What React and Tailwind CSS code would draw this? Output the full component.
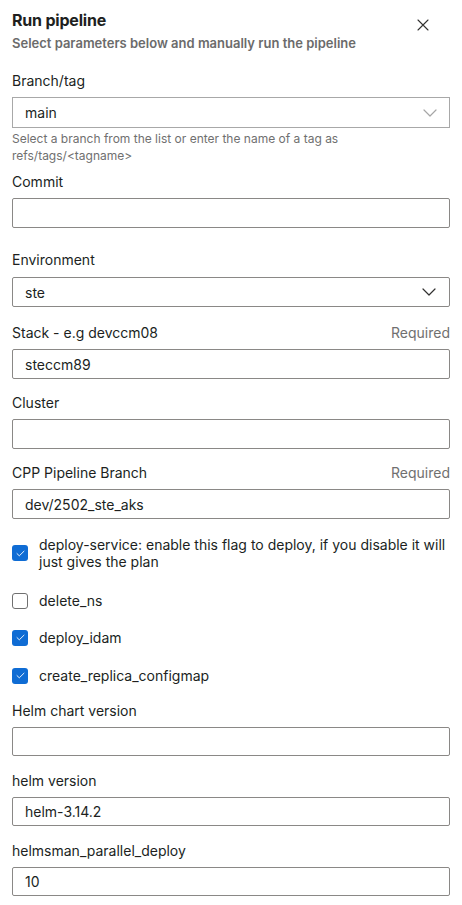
import React, { useState } from "react";

const Chevron = ({ light }) => (
  <svg width="14" height="8" viewBox="0 0 14 8" fill="none" className={light ? "text-[#a6a6a6]" : "text-[#323130]"}>
    <path d="M1 1l6 6 6-6" stroke="currentColor" strokeWidth="1.2" strokeLinecap="round" strokeLinejoin="round" />
  </svg>
);

const Label = ({ children, required }) => (
  <div className="flex items-center justify-between h-5 leading-5 text-[14px] text-[#201f1e]">
    <span>{children}</span>
    {required && <span className="text-[#707070]">Required</span>}
  </div>
);

const TextField = ({ label, value, required, short, className = "" }) => (
  <div className={className}>
    <Label required={required}>{label}</Label>
    <div
      className={`mt-1.5 ${short ? "h-[29px]" : "h-[30px]"} border border-[#8a8886] rounded-[2px] flex items-center px-3 text-[14px] text-[#201f1e]`}
    >
      {value}
    </div>
  </div>
);

const Check = ({ checked, children, className = "" }) => (
  <div className={`flex items-center gap-[11px] ${className}`}>
    <div
      className={`w-4 h-4 shrink-0 rounded-[3px] flex items-center justify-center ${
        checked ? "bg-[#0f6cd4]" : "border border-[#707070] bg-white"
      }`}
    >
      {checked && (
        <svg width="9" height="7" viewBox="0 0 9 7" fill="none">
          <path d="M1 3.6l2.3 2.2L8 1.2" stroke="white" strokeWidth="0.9" strokeLinecap="round" strokeLinejoin="round" />
        </svg>
      )}
    </div>
    <span className="text-[14px] leading-[17px] text-[#201f1e]">{children}</span>
  </div>
);

export default function App() {
  const [flags] = useState({ deploy: true, del: false, idam: true, replica: true });

  return (
    <div className="w-[462px] h-[905px] bg-white px-3 font-['Inter',sans-serif] overflow-hidden">
      {/* Header */}
      <div className="flex items-start justify-between pt-[10px]">
        <div>
          <h1 className="text-[16px] leading-5 font-bold text-[#201f1e] tracking-[-0.2px]">Run pipeline</h1>
          <p className="mt-[3px] text-[13px] leading-5 font-semibold text-[#6b6b6b]">
            Select parameters below and manually run the pipeline
          </p>
        </div>
        <button className="mt-[9px] mr-[21px] text-[#323130]">
          <svg width="12" height="12" viewBox="0 0 12 12" fill="none">
            <path d="M1 1l10 10M11 1L1 11" stroke="currentColor" strokeWidth="1.1" strokeLinecap="round" />
          </svg>
        </button>
      </div>

      {/* Branch/tag */}
      <div className="mt-[18px]">
        <Label>Branch/tag</Label>
        <div className="mt-1.5 h-[31px] border border-[#a8a8a8] flex items-center justify-between pl-3 pr-[12px] text-[14px] text-[#201f1e]">
          <span>main</span>
          <Chevron light />
        </div>
        <p className="mt-[2px] text-[12px] leading-[17px] text-[#707070] pr-8">
          Select a branch from the list or enter the name of a tag as refs/tags/&lt;tagname&gt;
        </p>
      </div>

      <TextField label="Commit" value="" className="mt-[8px]" />

      {/* Environment */}
      <div className="mt-[22px]">
        <Label>Environment</Label>
        <div className="mt-[7px] h-[30px] border border-[#8a8886] rounded-[2px] flex items-center justify-between pl-3 pr-[13px] text-[14px] text-[#201f1e]">
          <span>ste</span>
          <Chevron />
        </div>
      </div>

      <TextField label="Stack - e.g devccm08" value="steccm89" required className="mt-4" />
      <TextField label="Cluster" value="" className="mt-[14px]" />
      <TextField label="CPP Pipeline Branch" value="dev/2502_ste_aks" required className="mt-[14px]" />

      {/* Flags */}
      <div className="mt-[17px] flex flex-col">
        <Check checked={flags.deploy}>
          deploy-service: enable this flag to deploy, if you disable it will
          <br />
          just gives the plan
        </Check>
        <Check checked={flags.del} className="mt-[22px]">delete_ns</Check>
        <Check checked={flags.idam} className="mt-[20px]">deploy_idam</Check>
        <Check checked={flags.replica} className="mt-[21px]">create_replica_configmap</Check>
      </div>

      <TextField label="Helm chart version" value="" short className="mt-[17px]" />
      <TextField label="helm version" value="helm-3.14.2" short className="mt-[15px]" />
      <TextField label="helmsman_parallel_deploy" value="10" short className="mt-[15px]" />
    </div>
  );
}
